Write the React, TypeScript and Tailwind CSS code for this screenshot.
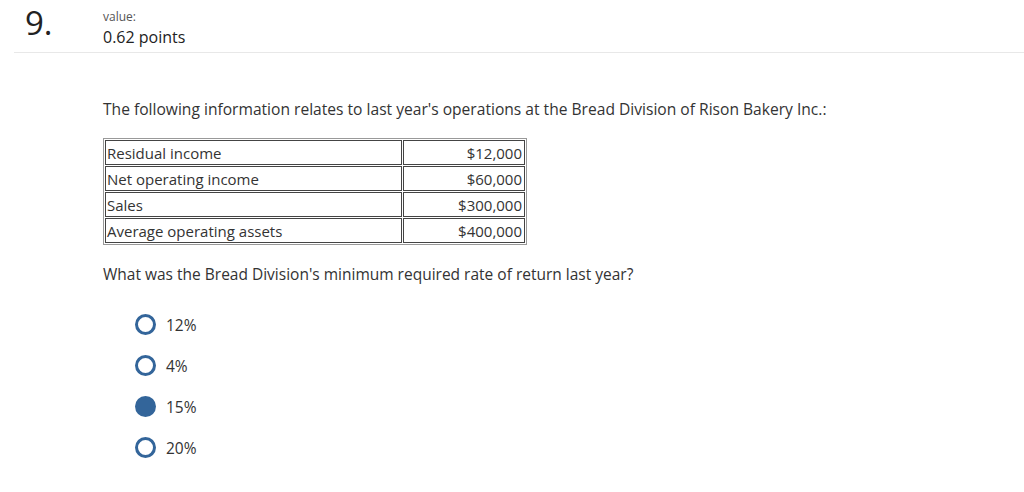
import React from 'react';

const rows: [string, string][] = [
  ['Residual income', '$12,000'],
  ['Net operating income', '$60,000'],
  ['Sales', '$300,000'],
  ['Average operating assets', '$400,000'],
];

const options = [
  { label: '12%', checked: false },
  { label: '4%', checked: false },
  { label: '15%', checked: true },
  { label: '20%', checked: false },
];

export default function App() {
  return (
    <div className="w-[1024px] h-[492px] bg-white text-[#333] font-['Open_Sans',sans-serif] overflow-hidden">
      {/* Header */}
      <div className="flex items-start ml-[14px] h-[53px] border-b border-[#e8e8e8]">
        <div className="w-[89px] pl-[11px] pt-[4px] text-[33px] leading-[38px] text-[#222]">9.</div>
        <div className="pt-[9px]">
          <div className="text-[12px] leading-[15px] text-[#555]">value:</div>
          <div className="text-[16px] leading-[20px] mt-[3px] text-[#222]">0.62 points</div>
        </div>
      </div>

      {/* Question */}
      <div className="pl-[103px] pt-[46px]">
        <p className="text-[15.6px] leading-[20px]">
          The following information relates to last year's operations at the Bread Division of Rison Bakery Inc.:
        </p>

        <table className="mt-[19px] border border-[#999] border-separate border-spacing-[1px] text-[15px] leading-[20px]">
          <tbody>
            {rows.map(([label, value]) => (
              <tr key={label}>
                <td className="w-[297px] h-[25px] border border-[#444] pl-[1px] pr-[2px] py-0 align-middle">{label}</td>
                <td className="w-[122px] h-[25px] border border-[#444] px-[2px] py-0 text-right align-middle">{value}</td>
              </tr>
            ))}
          </tbody>
        </table>

        <p className="mt-[19px] text-[15.5px] leading-[20px]">
          What was the Bread Division's minimum required rate of return last year?
        </p>

        <div className="mt-[30px] pl-[32px] flex flex-col gap-[20px]">
          {options.map((o) => (
            <label key={o.label} className="flex items-center gap-[10px] h-[21px]">
              {o.checked ? (
                <span className="w-[21px] h-[21px] rounded-full bg-[#33659a]" />
              ) : (
                <span className="w-[21px] h-[21px] rounded-full border-[3px] border-[#33659a]" />
              )}
              <span className="text-[15.5px] leading-[20px]">{o.label}</span>
            </label>
          ))}
        </div>
      </div>
    </div>
  );
}
